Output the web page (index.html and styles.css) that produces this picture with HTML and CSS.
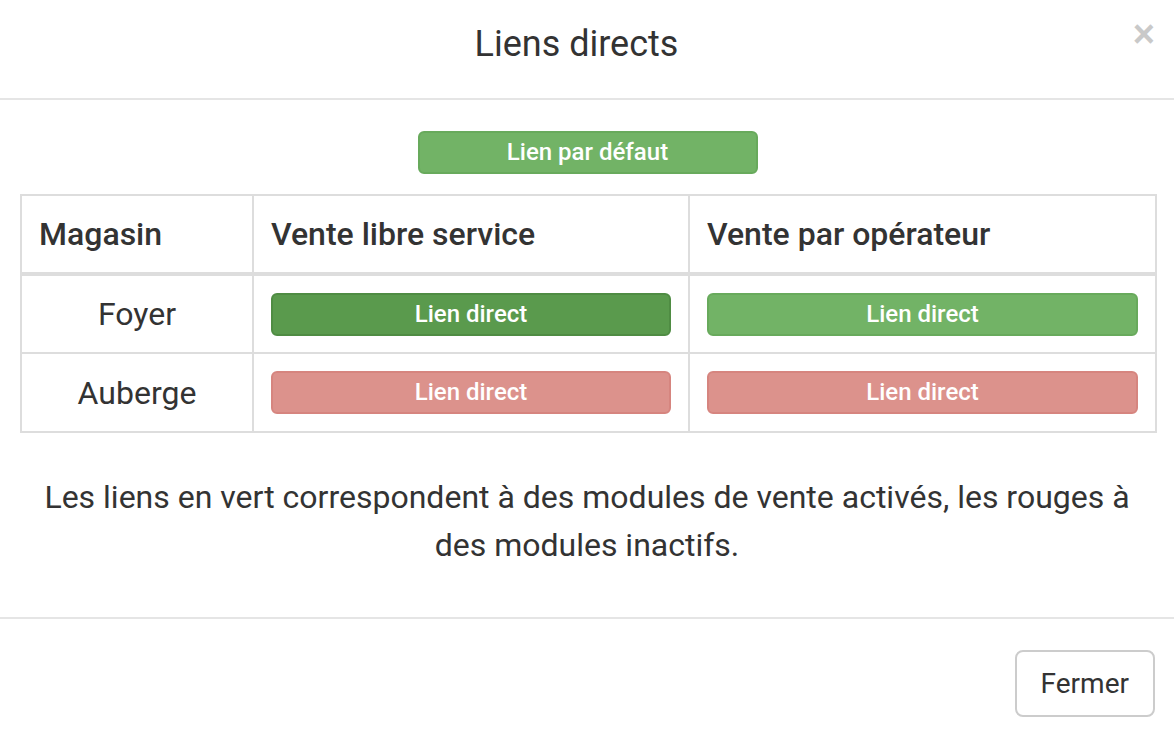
FILE: index.html
```html
<!DOCTYPE html>
<html lang="fr">
<head>
<meta charset="utf-8">
<title>Liens directs</title>
<link rel="stylesheet" href="styles.css">
</head>
<body>
<div class="modal">
  <div class="modal-header">
    <h4 class="modal-title">Liens directs</h4>
    <span class="close">×</span>
  </div>
  <div class="modal-body">
    <div class="default-row">
      <a class="btn btn-xs btn-green btn-default-link">Lien par défaut</a>
    </div>
    <table class="links-table">
      <colgroup>
        <col class="col-shop">
        <col class="col-self">
        <col class="col-op">
      </colgroup>
      <thead>
        <tr>
          <th>Magasin</th>
          <th>Vente libre service</th>
          <th>Vente par opérateur</th>
        </tr>
      </thead>
      <tbody>
        <tr>
          <td class="shop">Foyer</td>
          <td><a class="btn btn-xs btn-dark-green">Lien direct</a></td>
          <td><a class="btn btn-xs btn-green">Lien direct</a></td>
        </tr>
        <tr>
          <td class="shop">Auberge</td>
          <td><a class="btn btn-xs btn-red">Lien direct</a></td>
          <td><a class="btn btn-xs btn-red">Lien direct</a></td>
        </tr>
      </tbody>
    </table>
    <p class="legend">Les liens en vert correspondent à des modules de vente activés, les rouges à des modules inactifs.</p>
  </div>
  <div class="modal-footer">
    <a class="btn btn-close">Fermer</a>
  </div>
</div>
</body>
</html>
```

FILE: styles.css
```css
* { box-sizing: border-box; }

html, body {
  margin: 0;
  padding: 0;
  background: #fff;
}

body {
  font-family: Roboto, "Liberation Sans", Arial, sans-serif;
  color: #333;
  font-size: 32px;
}

.modal {
  width: 1174px;
}

.modal-header {
  position: relative;
  height: 100px;
  border-bottom: 2px solid #e5e5e5;
  display: flex;
  align-items: center;
  justify-content: center;
  padding: 0 21px 10px 0;
}

.modal-title {
  margin: 0;
  font-size: 36px;
  font-weight: 400;
  line-height: 42px;
}

.close {
  position: absolute;
  right: 19px;
  top: 14px;
  font-family: "Liberation Sans", Arial, sans-serif;
  font-size: 38px;
  font-weight: bold;
  line-height: 40px;
  color: #c9c9c9;
}

.modal-body {
  padding: 30px 20px 48px 20px;
}

.default-row {
  text-align: center;
}

.btn {
  display: inline-block;
  text-align: center;
  white-space: nowrap;
  cursor: pointer;
}

.btn-xs {
  display: block;
  height: 43px;
  font-size: 24px;
  font-weight: 500;
  line-height: 39px;
  border: 2px solid transparent;
  border-radius: 6px;
  color: #fff;
}

.btn-default-link {
  display: inline-block;
  width: 340px;
  margin-left: 1px;
}

.btn-green {
  background: #72b366;
  border-color: #68aa5c;
}

.btn-dark-green {
  background: #5a9a4d;
  border-color: #4f8c43;
}

.btn-red {
  background: #dc928c;
  border-color: #d6857f;
}

.links-table {
  margin-top: 20px;
  width: 1135px;
  border-collapse: collapse;
  table-layout: fixed;
}

.col-shop { width: 232px; }
.col-self { width: 436px; }
.col-op { width: 467px; }

.links-table th,
.links-table td {
  border: 2px solid #ddd;
}

.links-table th {
  height: 79px;
  padding: 0 17px;
  text-align: left;
  font-weight: 500;
  font-size: 32px;
  border-bottom-width: 4px;
  vertical-align: middle;
}

.links-table td {
  height: 79px;
  padding: 0 17px;
  vertical-align: middle;
}

.links-table td.shop {
  text-align: center;
  font-size: 32px;
}

.legend {
  margin: 40px 0 0;
  text-align: center;
  font-size: 32px;
  line-height: 48px;
}

.modal-footer {
  border-top: 2px solid #e5e5e5;
  padding: 31px 19px 22px;
  text-align: right;
}

.btn-close {
  height: 67px;
  padding: 0 24px;
  font-size: 28px;
  line-height: 63px;
  color: #333;
  background: #fff;
  border: 2px solid #ccc;
  border-radius: 8px;
}
```
